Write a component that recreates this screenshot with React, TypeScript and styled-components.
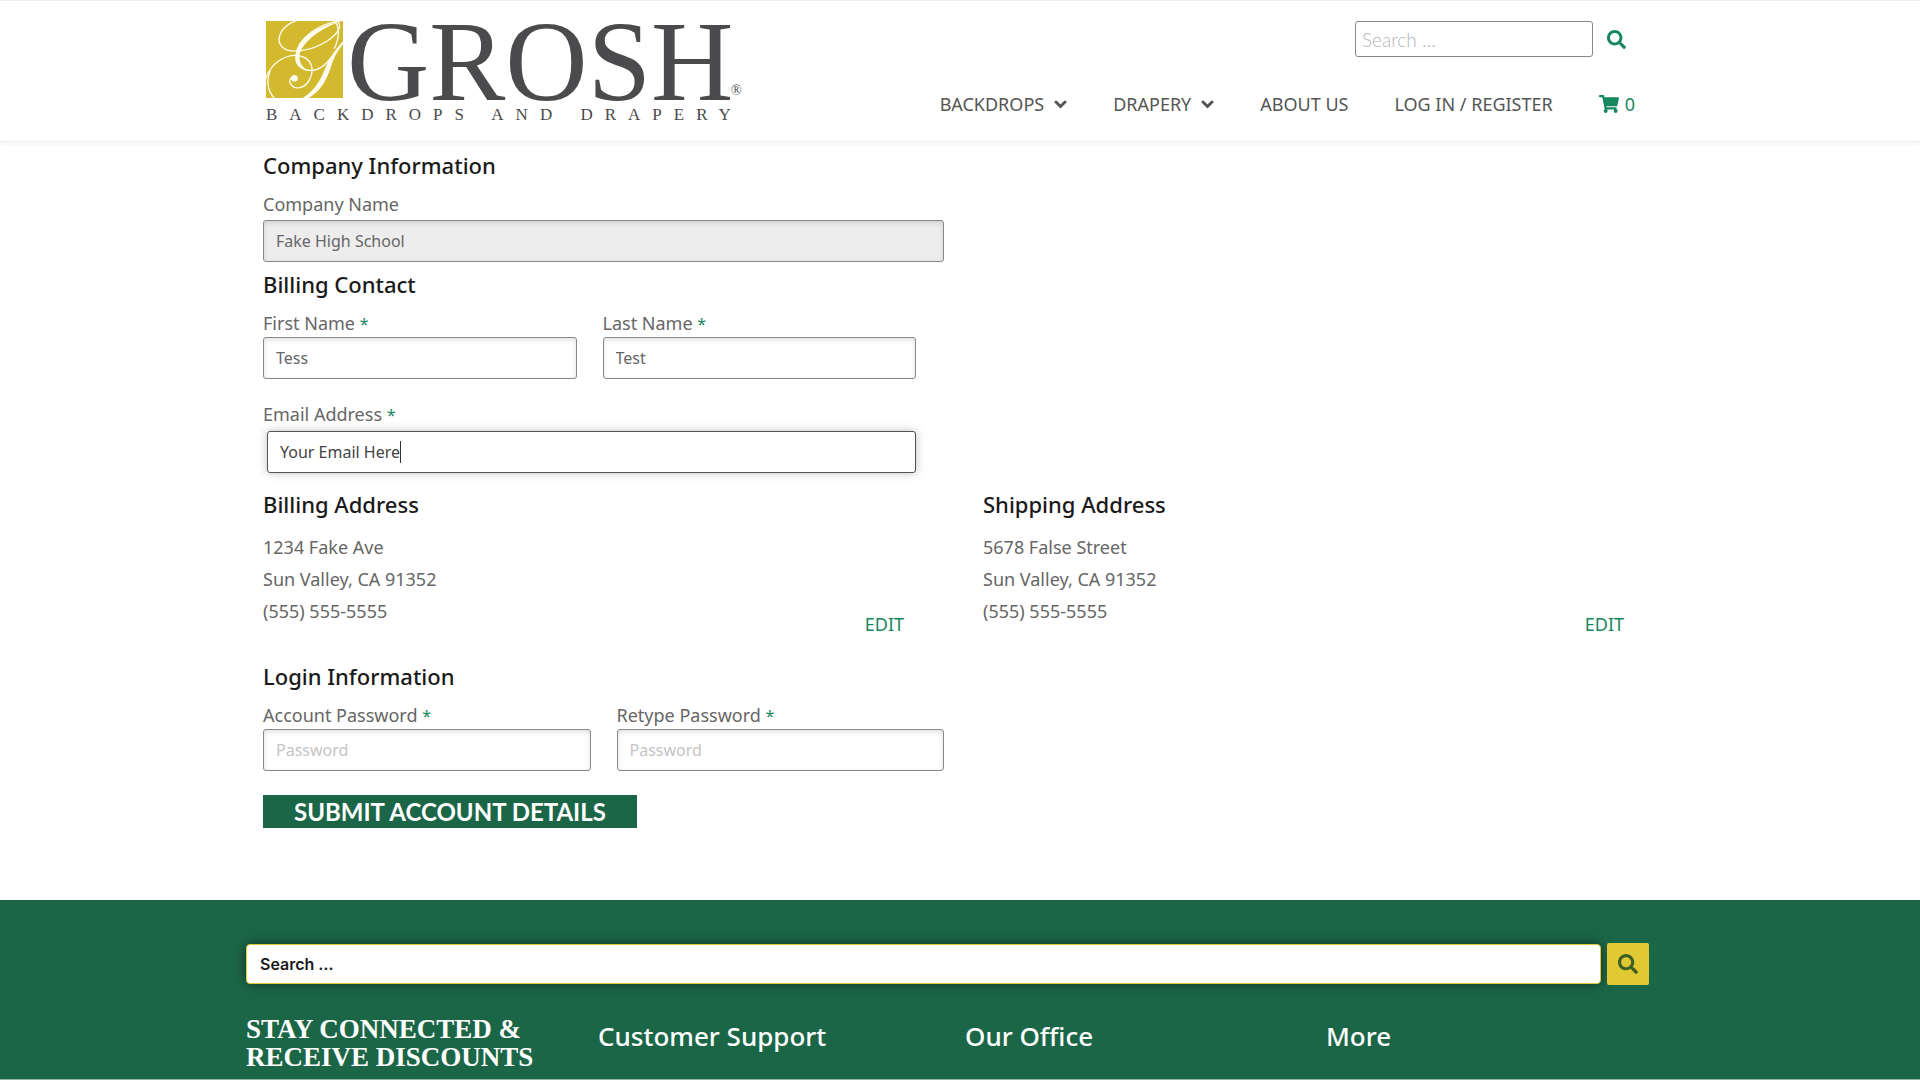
import React, { useId } from "react";
import styled, { createGlobalStyle } from "styled-components";
import { FaSearch, FaShoppingCart } from "react-icons/fa";

const sans = `"Noto Sans", "Open Sans", sans-serif`;
const green = "#1c6648";
const accent = "#17875f";

const GlobalStyle = createGlobalStyle`
  *, *::before, *::after { box-sizing: border-box; }
  body { margin: 0; background: #fff; color: #666; font-family: ${sans}; font-size: 18px; }
  h1, h2, h3, p { margin: 0; }
  a { color: inherit; text-decoration: none; }
`;

const Container = styled.div`
  max-width: 1440px;
  margin: 0 auto;
`;

const Header = styled.header`
  border-top: 1px solid #eee;
  border-bottom: 1px solid #eee;
  box-shadow: 0 2px 4px rgba(0, 0, 0, 0.05);
`;

const HeaderInner = styled(Container)`
  display: flex;
  flex-wrap: wrap;
  justify-content: space-between;
  padding: 16px 45px 16px 26px;
  min-height: 140px;
`;

const LogoLink = styled.a`
  display: block;
  > svg { display: block; width: 480px; max-width: 100%; height: auto; overflow: visible; }
`;

const HeaderSide = styled.div`
  display: flex;
  flex-direction: column;
  align-items: flex-end;
  gap: 35px;
  padding-top: 4px;
`;

const TopSearch = styled.form`
  display: flex;
  align-items: center;
  gap: 14px;
  padding-right: 9px;
`;

const TopSearchInput = styled.input`
  width: 238px;
  height: 36px;
  padding: 0 6px;
  border: 1px solid #888;
  border-radius: 3px;
  font: 300 19px Lato, sans-serif;
  &::placeholder { color: #b4b4b4; opacity: 1; }
`;

const IconButton = styled.button`
  display: flex;
  padding: 0;
  border: 0;
  background: none;
  color: ${accent};
  font-size: 19px;
`;

const Nav = styled.nav`
  display: flex;
  flex-wrap: wrap;
  gap: 46px;
  font-size: 18px;
  line-height: 24px;
  color: #555;
`;

const NavLink = styled.a`
  display: flex;
  align-items: center;
  gap: 10px;
`;

const CartLink = styled.a`
  display: flex;
  align-items: center;
  gap: 6px;
  color: ${accent};
  svg { font-size: 20px; }
`;

const Column = styled.section`
  padding: 0 56px 0 23px;
`;

const Columns = styled.div`
  display: grid;
  grid-template-columns: 1fr 1fr;
  margin-top: 15px;
  @media (max-width: 900px) { grid-template-columns: 1fr; }
`;

const Account = styled.form`
  padding: 7px 0 72px;
`;

const Title = styled.h2`
  margin-bottom: 11px;
  color: #1a1a1a;
  font-size: 22px;
  font-weight: 500;
  line-height: 32px;
`;

const Section = styled.div<{ $space: number; $inset?: number }>`
  max-width: ${(p) => 681 - (p.$inset ?? 0)}px;
  margin-top: ${(p) => p.$space}px;
`;

const FieldRow = styled.div`
  display: grid;
  grid-template-columns: 1fr 1fr;
  gap: 26px;
`;

const FieldBox = styled.div<{ $gap: number }>`
  display: flex;
  flex-direction: column;
  gap: ${(p) => p.$gap}px;
`;

const Label = styled.label`
  font-size: 18px;
  line-height: 24px;
`;

const Asterisk = styled.span`
  color: ${accent};
  font-size: 16px;
`;

const TextInput = styled.input`
  width: 100%;
  height: 42px;
  padding: 0 12px;
  border: 1px solid #888;
  border-radius: 3px;
  background: #fff;
  box-shadow: inset 0 2px 5px rgba(0, 0, 0, 0.12);
  color: #666;
  font: 16px ${sans};
  &:disabled { background: #ededed; }
  &::placeholder { color: #c4c4c4; opacity: 1; }
`;

const ActiveWrap = styled.div`
  position: relative;
  padding: 3px 0 0 4px;
`;

const ActiveInput = styled(TextInput)`
  border-color: #555;
  box-shadow: 0 0 10px rgba(0, 0, 0, 0.25);
  color: #444;
  outline: none;
  &:focus + span { display: none; }
`;

const Caret = styled.span`
  position: absolute;
  top: 13px;
  left: 137px;
  width: 1px;
  height: 22px;
  background: #333;
`;

const AddressRow = styled.div`
  display: flex;
  justify-content: space-between;
  align-items: flex-end;
`;

const AddressText = styled.address`
  padding-bottom: 9px;
  font-style: normal;
  font-size: 18px;
  line-height: 32px;
`;

const EditLink = styled.a`
  color: ${accent};
  font-size: 18px;
  line-height: 24px;
`;

const Submit = styled.button`
  display: block;
  margin-top: 24px;
  height: 33px;
  padding: 0 31px;
  border: 0;
  background: ${green};
  color: #fff;
  font: 700 24px/33px Lato, sans-serif;
`;

const Footer = styled.footer`
  background: ${green};
  border-bottom: 1px solid #8fb3a3;
  color: #fff;
`;

const FooterInner = styled(Container)`
  padding: 43px 31px 8px 6px;
`;

const FooterSearch = styled.form`
  display: flex;
  align-items: center;
  gap: 6px;
`;

const FooterInput = styled.input`
  flex: 1;
  min-width: 0;
  height: 40px;
  padding: 0 13px;
  border: 1px solid #e0c932;
  border-radius: 4px;
  background: #fff;
  box-shadow: 0 0 12px rgba(0, 0, 0, 0.5);
  font: 600 16px Inter, sans-serif;
  &::placeholder { color: #1a1a1a; opacity: 1; }
`;

const FooterButton = styled.button`
  display: flex;
  align-items: center;
  justify-content: center;
  width: 42px;
  height: 42px;
  border: 0;
  border-radius: 2px;
  background: #e0c932;
  color: #3c5f24;
  font-size: 20px;
`;

const FooterColumns = styled.div`
  display: grid;
  grid-template-columns: 352fr 367fr 361fr 323fr;
  align-items: start;
  margin-top: 30px;
`;

const Newsletter = styled.h3`
  font: 700 27px/28px "Liberation Serif", serif;
`;

const FooterTitle = styled.h3`
  font-size: 26px;
  font-weight: 500;
  line-height: 42px;
`;

function Chevron() {
  return (
    <svg width="13" height="9" viewBox="0 0 26 18" aria-hidden="true">
      <path d="M4 4L13 13L22 4" fill="none" stroke="currentColor" strokeWidth="6" strokeLinecap="round" />
    </svg>
  );
}

function Logo() {
  return (
    <svg viewBox="0 0 480 108" role="img" aria-label="Grosh Backdrops and Drapery">
      <svg x="0" y="4" width="77" height="77" viewBox="18 21 230 230">
        <rect x="18" y="21" width="230" height="230" fill="#d2b92e" />
        <g fill="none" stroke="#fffdf0" strokeWidth="4">
          <path d="M112 19C70 32 46 66 62 94C82 124 156 110 202 80C240 54 246 30 228 20" />
          <path d="M250 19C180 26 112 70 108 124C108 158 132 172 160 168C200 162 222 112 250 84" />
          <path d="M16 196C32 146 74 122 112 124C156 130 164 166 148 196C134 224 102 228 91 208C86 196 92 188 100 190" />
          <path d="M30 170C18 202 24 236 46 254" />
          <path d="M222 20C240 40 236 74 222 104" />
        </g>
        <path d="M236 24C170 48 120 92 118 126C117 142 124 154 136 164C112 164 100 142 108 114C122 72 172 34 236 24Z" fill="#fffdf0" />
        <path d="M248 82C226 104 208 130 194 164C180 202 160 232 126 252H144C182 232 200 196 212 158C220 130 232 108 250 88Z" fill="#fffdf0" />
        <circle cx="103" cy="192" r="10" fill="#fffdf0" />
      </svg>
      <text x="81" y="83" fontFamily="Liberation Serif, serif" fontSize="114" fill="#4b4a4c">GROSH</text>
      <text x="465" y="78" fontFamily="Liberation Serif, serif" fontSize="14" fill="#4b4a4c">®</text>
      <text x="0" y="103" fontFamily="Liberation Serif, serif" fontSize="17" letterSpacing="12" fill="#4b4a4c">BACKDROPS AND DRAPERY</text>
    </svg>
  );
}

type FieldProps = {
  label: string;
  value?: string;
  type?: string;
  placeholder?: string;
  required?: boolean;
  disabled?: boolean;
  active?: boolean;
};

function Field({ label, value, type = "text", placeholder, required, disabled, active }: FieldProps) {
  const id = useId();
  const shared = { id, type, placeholder, disabled, defaultValue: value };
  return (
    <FieldBox $gap={required ? 1 : 4}>
      <Label htmlFor={id}>
        {label} {required && <Asterisk>*</Asterisk>}
      </Label>
      {active ? (
        <ActiveWrap>
          <ActiveInput {...shared} />
          <Caret aria-hidden="true" />
        </ActiveWrap>
      ) : (
        <TextInput {...shared} />
      )}
    </FieldBox>
  );
}

function Address({ title, street }: { title: string; street: string }) {
  return (
    <Column>
      <Title>{title}</Title>
      <AddressRow>
        <AddressText>
          {street}
          <br />
          Sun Valley, CA 91352
          <br />
          (555) 555-5555
        </AddressText>
        <EditLink href="#edit">EDIT</EditLink>
      </AddressRow>
    </Column>
  );
}

const FormColumn = styled.div`
  padding: 0 23px;
`;

export default function App() {
  return (
    <>
      <GlobalStyle />
      <Header>
        <HeaderInner>
          <LogoLink href="#home">
            <Logo />
          </LogoLink>
          <HeaderSide>
            <TopSearch>
              <TopSearchInput type="search" aria-label="Search" placeholder="Search …" />
              <IconButton type="button" aria-label="Submit search">
                <FaSearch />
              </IconButton>
            </TopSearch>
            <Nav>
              <NavLink href="#backdrops">BACKDROPS <Chevron /></NavLink>
              <NavLink href="#drapery">DRAPERY <Chevron /></NavLink>
              <NavLink href="#about">ABOUT US</NavLink>
              <NavLink href="#login">LOG IN / REGISTER</NavLink>
              <CartLink href="#cart"><FaShoppingCart /> 0</CartLink>
            </Nav>
          </HeaderSide>
        </HeaderInner>
      </Header>

      <Container as="main">
        <Account>
          <FormColumn>
            <Section $space={0}>
              <Title>Company Information</Title>
              <Field label="Company Name" value="Fake High School" disabled />
            </Section>
            <Section $space={6} $inset={28}>
              <Title>Billing Contact</Title>
              <FieldRow>
                <Field label="First Name" value="Tess" required />
                <Field label="Last Name" value="Test" required />
              </FieldRow>
            </Section>
            <Section $space={23} $inset={28}>
              <Field label="Email Address" value="Your Email Here" type="email" required active />
            </Section>
          </FormColumn>
          <Columns>
            <Address title="Billing Address" street="1234 Fake Ave" />
            <Address title="Shipping Address" street="5678 False Street" />
          </Columns>
          <FormColumn>
            <Section $space={24}>
              <Title>Login Information</Title>
              <FieldRow>
                <Field label="Account Password" type="password" placeholder="Password" required />
                <Field label="Retype Password" type="password" placeholder="Password" required />
              </FieldRow>
            </Section>
            <Submit type="button">SUBMIT ACCOUNT DETAILS</Submit>
          </FormColumn>
        </Account>
      </Container>

      <Footer>
        <FooterInner>
          <FooterSearch>
            <FooterInput type="search" aria-label="Search the site" placeholder="Search …" />
            <FooterButton type="button" aria-label="Submit site search">
              <FaSearch />
            </FooterButton>
          </FooterSearch>
          <FooterColumns>
            <Newsletter>
              STAY CONNECTED &amp;
              <br />
              RECEIVE DISCOUNTS
            </Newsletter>
            <FooterTitle>Customer Support</FooterTitle>
            <FooterTitle>Our Office</FooterTitle>
            <FooterTitle>More</FooterTitle>
          </FooterColumns>
        </FooterInner>
      </Footer>
    </>
  );
}
